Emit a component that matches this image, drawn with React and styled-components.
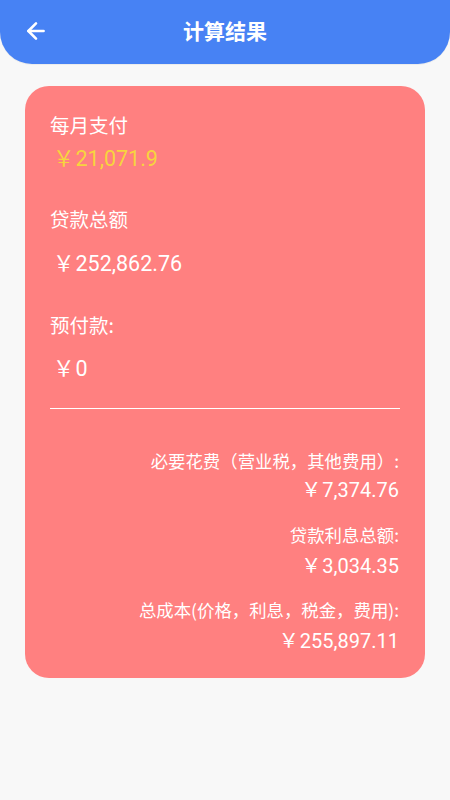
import React from "react";
import styled, { createGlobalStyle } from "styled-components";
import { ArrowLeft } from "lucide-react";

const Global = createGlobalStyle`
  html, body { margin: 0; padding: 0; background: #f8f8f8; }
  body { font-family: Roboto, "Noto Sans CJK SC", sans-serif; }
  * { box-sizing: border-box; }
`;

const Page = styled.div`
  width: 450px;
  min-height: 800px;
  background: #f8f8f8;
`;

const Header = styled.header`
  height: 64px;
  background: #4782f4;
  border-radius: 0 0 32px 32px;
  display: flex;
  align-items: center;
  justify-content: center;
  position: relative;
  color: #fff;
  box-shadow: 0 1px 0 #ececec;
`;

const Back = styled.button`
  position: absolute;
  left: 22px;
  top: 17px;
  width: 28px;
  height: 28px;
  padding: 0;
  border: none;
  background: none;
  color: #fff;
  display: flex;
  align-items: center;
  justify-content: center;
`;

const Title = styled.h1`
  margin: 0;
  font-family: "Noto Sans CJK SC", sans-serif;
  font-size: 21px;
  font-weight: 700;
  line-height: 1;
  margin-top: -3px;
`;

const Card = styled.section`
  margin: 22px 25px 0;
  background: #ff8080;
  border-radius: 24px;
  padding: 26px 25px 23px;
  color: #fff;
  display: flex;
  flex-direction: column;
`;

const Label = styled.div`
  font-family: "Noto Sans CJK SC", sans-serif;
  font-size: 19.5px;
  height: 26px;
  line-height: 26px;
  margin-top: ${(p) => p.$mt || 0}px;
`;

const Value = styled.div`
  font-family: Roboto, "Noto Sans CJK SC", sans-serif;
  font-size: 21.5px;
  height: 30px;
  line-height: 30px;
  padding-left: 3px;
  white-space: nowrap;
  color: ${(p) => p.$color || "#fff"};
  margin-top: ${(p) => p.$mt || 0}px;
`;

const Divider = styled.hr`
  margin: 24px 0 0;
  border: none;
  height: 1px;
  background: #fff;
`;

const Right = styled.div`
  display: flex;
  flex-direction: column;
  align-items: flex-end;
  padding-right: 1px;
`;

const RLabel = styled.div`
  font-family: "Noto Sans CJK SC", sans-serif;
  font-size: 17.4px;
  height: 24px;
  line-height: 24px;
  white-space: nowrap;
  margin-top: ${(p) => p.$mt || 0}px;
`;

const RValue = styled.div`
  font-family: Roboto, "Noto Sans CJK SC", sans-serif;
  font-size: 20px;
  height: 28px;
  line-height: 28px;
  white-space: nowrap;
  margin-top: ${(p) => p.$mt || 0}px;
`;

const Yen = styled.span`
  font-family: "Noto Sans CJK SC", sans-serif;
  line-height: 1;
  margin-right: 1px;
`;

export default function App() {
  return (
    <Page>
      <Global />
      <Header>
        <Back aria-label="返回">
          <ArrowLeft size={26} strokeWidth={2.4} />
        </Back>
        <Title>计算结果</Title>
      </Header>
      <Card>
        <Label>每月支付</Label>
        <Value $mt={6} $color="#f7d43e">
          <Yen>￥</Yen>21,071.9
        </Value>
        <Label $mt={32}>贷款总额</Label>
        <Value $mt={17}>
          <Yen>￥</Yen>252,862.76
        </Value>
        <Label $mt={33}>预付款:</Label>
        <Value $mt={16}>
          <Yen>￥</Yen>0
        </Value>
        <Divider />
        <Right>
          <RLabel $mt={40}>必要花费（营业税，其他费用）:</RLabel>
          <RValue $mt={3}>
            <Yen>￥</Yen>7,374.76
          </RValue>
          <RLabel $mt={19}>贷款利息总额:</RLabel>
          <RValue $mt={5}>
            <Yen>￥</Yen>3,034.35
          </RValue>
          <RLabel $mt={18}>总成本(价格，利息，税金，费用):</RLabel>
          <RValue $mt={5}>
            <Yen>￥</Yen>255,897.11
          </RValue>
        </Right>
      </Card>
    </Page>
  );
}
